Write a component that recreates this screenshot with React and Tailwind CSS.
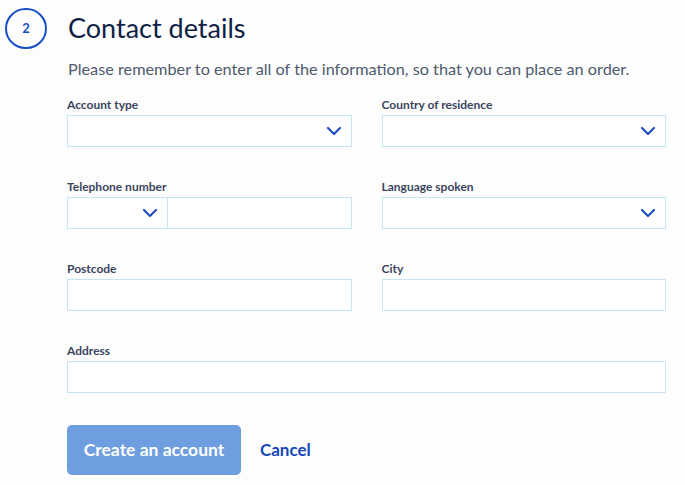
import React from 'react';

const Chevron = () => (
  <svg width="16" height="10" viewBox="0 0 16 10" fill="none" className="shrink-0">
    <path d="M2 2l6 6 6-6" stroke="#1f4fbf" strokeWidth="2.2" strokeLinecap="round" strokeLinejoin="round" />
  </svg>
);

const Field = ({ label, children }) => (
  <div className="flex flex-col">
    <label className="text-[12px] font-bold text-[#3b4560] leading-[15px] mb-[3px]">{label}</label>
    {children}
  </div>
);

const Box = ({ select }) => (
  <div className="h-[32px] border border-[#c3e6f2] bg-white flex items-center justify-end pr-[9px]">
    {select && <Chevron />}
  </div>
);

export default function App() {
  return (
    <div className="w-[685px] h-[485px] bg-[#fcfdfc] overflow-hidden" style={{ fontFamily: 'Lato, "Open Sans", sans-serif' }}>
      <div className="flex items-start pt-[8px] pl-[5px]">
        <div className="w-[42px] h-[41px] rounded-full border-2 border-[#1a4fc4] flex items-center justify-center text-[13px] font-bold text-[#1a4fc4]">2</div>
        <div className="ml-[21px] flex flex-col">
          <h1 className="text-[27px] leading-[38px] text-[#0f1f45] mt-[1px]">Contact details</h1>
          <p className="text-[16.25px] text-[#4f5a6e] mt-[12px] leading-[20px]">Please remember to enter all of the information, so that you can place an order.</p>
        </div>
      </div>
      <div className="pl-[67px] pr-[19px] mt-[18px] grid grid-cols-2 gap-x-[30px] gap-y-[32px]">
        <Field label="Account type"><Box select /></Field>
        <Field label="Country of residence"><Box select /></Field>
        <Field label="Telephone number">
          <div className="flex">
            <div className="w-[101px] h-[32px] border border-[#c3e6f2] bg-white flex items-center justify-end pr-[9px]"><Chevron /></div>
            <div className="flex-1 h-[32px] border border-l-0 border-[#c3e6f2] bg-white" />
          </div>
        </Field>
        <Field label="Language spoken"><Box select /></Field>
        <Field label="Postcode"><Box /></Field>
        <Field label="City"><Box /></Field>
        <div className="col-span-2"><Field label="Address"><Box /></Field></div>
      </div>
      <div className="pl-[67px] mt-[32px] flex items-center">
        <button className="w-[174px] h-[50px] rounded-[5px] bg-[#6f9ee0] text-white text-[17.5px] font-bold">Create an account</button>
        <span className="ml-[19px] text-[17px] font-bold text-[#1547b8]">Cancel</span>
      </div>
    </div>
  );
}
